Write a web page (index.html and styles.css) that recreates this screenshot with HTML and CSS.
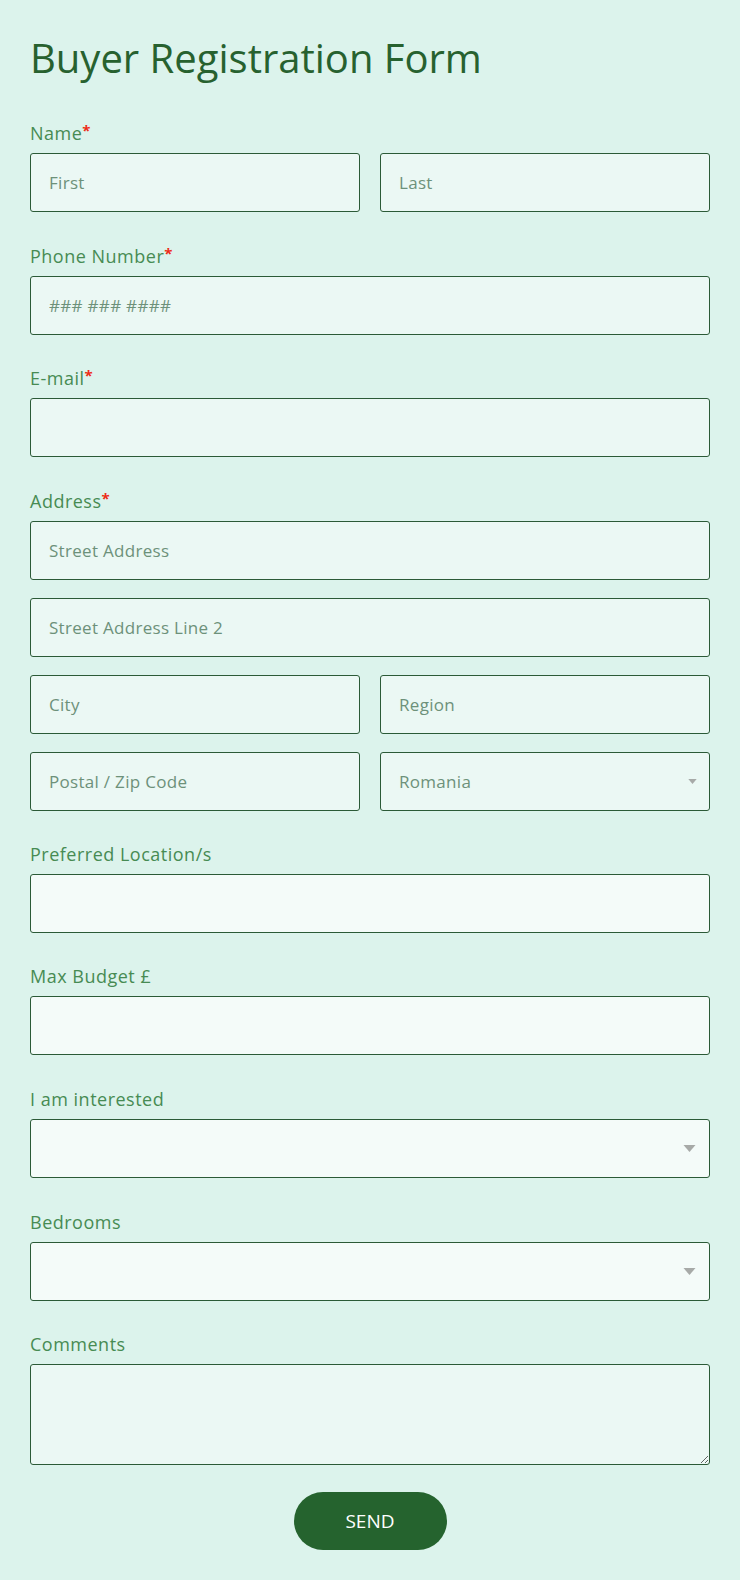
FILE: index.html
```html
<!DOCTYPE html>
<html lang="en">
<head>
<meta charset="utf-8">
<title>Buyer Registration Form</title>
<link rel="stylesheet" href="styles.css">
</head>
<body>
<form class="form">
  <h1 class="title">Buyer Registration Form</h1>

  <div class="field">
    <label class="label">Name<span class="req">*</span></label>
    <div class="row">
      <input class="input" type="text" placeholder="First">
      <input class="input" type="text" placeholder="Last">
    </div>
  </div>

  <div class="field">
    <label class="label">Phone Number<span class="req">*</span></label>
    <input class="input" type="text" placeholder="### ### ####">
  </div>

  <div class="field">
    <label class="label">E-mail<span class="req">*</span></label>
    <input class="input" type="text">
  </div>

  <div class="field address">
    <label class="label">Address<span class="req">*</span></label>
    <div class="stack">
      <input class="input" type="text" placeholder="Street Address">
      <input class="input" type="text" placeholder="Street Address Line 2">
      <div class="row">
        <input class="input" type="text" placeholder="City">
        <input class="input" type="text" placeholder="Region">
      </div>
      <div class="row">
        <input class="input" type="text" placeholder="Postal / Zip Code">
        <div class="select-wrap">
          <div class="input select-box">Romania</div>
          <svg class="arrow small" viewBox="0 0 10 6" width="9" height="5"><path d="M0 0h10L5 6z" fill="#a7aaa8"/></svg>
        </div>
      </div>
    </div>
  </div>

  <div class="field">
    <label class="label">Preferred Location/s</label>
    <input class="input light" type="text">
  </div>

  <div class="field">
    <label class="label">Max Budget £</label>
    <input class="input light" type="text">
  </div>

  <div class="field">
    <label class="label">I am interested</label>
    <div class="select-wrap">
      <div class="input light select-box"></div>
      <svg class="arrow" viewBox="0 0 12 7" width="13" height="7"><path d="M0 0h12L6 7z" fill="#a7aaa8"/></svg>
    </div>
  </div>

  <div class="field">
    <label class="label">Bedrooms</label>
    <div class="select-wrap">
      <div class="input light select-box"></div>
      <svg class="arrow" viewBox="0 0 12 7" width="13" height="7"><path d="M0 0h12L6 7z" fill="#a7aaa8"/></svg>
    </div>
  </div>

  <div class="field last">
    <label class="label">Comments</label>
    <textarea class="input textarea"></textarea>
  </div>

  <div class="actions">
    <button class="send" type="button">SEND</button>
  </div>
</form>
</body>
</html>
```

FILE: styles.css
```css
html, body {
  margin: 0;
  padding: 0;
  background: #dcf3ec;
}

body {
  font-family: "Open Sans", "Noto Sans", sans-serif;
}

.form {
  width: 680px;
  padding: 34px 30px 0 30px;
  box-sizing: content-box;
}

.title {
  margin: 0 0 39px 0;
  font-family: "Open Sans", sans-serif;
  font-weight: 400;
  font-size: 40px;
  line-height: 48px;
  color: #27612f;
}

.field {
  display: flex;
  flex-direction: column;
  gap: 8px;
  margin-bottom: 31.7px;
}

.field.address {
  margin-bottom: 30.5px;
}

.field.last {
  margin-bottom: 27px;
}

.label {
  display: block;
  font-size: 18px;
  font-weight: 500;
  line-height: 24px;
  height: 24px;
  color: #478b53;
  letter-spacing: 0.5px;
}

.req {
  position: relative;
  top: -4px;
  line-height: 0;
  color: #ee2c17;
  font-weight: 700;
  font-size: 15px;
  letter-spacing: 0;
}

.row {
  display: grid;
  grid-template-columns: 1fr 1fr;
  gap: 20px;
}

.stack {
  display: flex;
  flex-direction: column;
  gap: 18px;
}

.input {
  display: block;
  width: 100%;
  height: 59px;
  box-sizing: border-box;
  margin: 0;
  padding: 0 18px;
  border: 1px solid #2b5a37;
  border-radius: 3px;
  background: #ebf8f4;
  font-family: "Open Sans", "Noto Sans", sans-serif;
  font-size: 17px;
  letter-spacing: 0.3px;
  color: #6d917a;
  outline: none;
}

.input::placeholder {
  color: #6d917a;
  opacity: 1;
}

.input.light {
  background: #f4fbf9;
}

.select-wrap {
  position: relative;
}

.select-box {
  display: flex;
  align-items: center;
}

.arrow {
  position: absolute;
  right: 14px;
  top: 26px;
}

.arrow.small {
  right: 13px;
  top: 27px;
}

.textarea {
  height: 101px;
  padding: 12px 18px;
  resize: vertical;
}

.actions {
  display: flex;
  justify-content: center;
}

.send {
  width: 153px;
  height: 58px;
  border: none;
  border-radius: 29px;
  background: #25632e;
  color: #ffffff;
  font-family: "Open Sans", sans-serif;
  font-size: 19px;
  cursor: pointer;
}
```
